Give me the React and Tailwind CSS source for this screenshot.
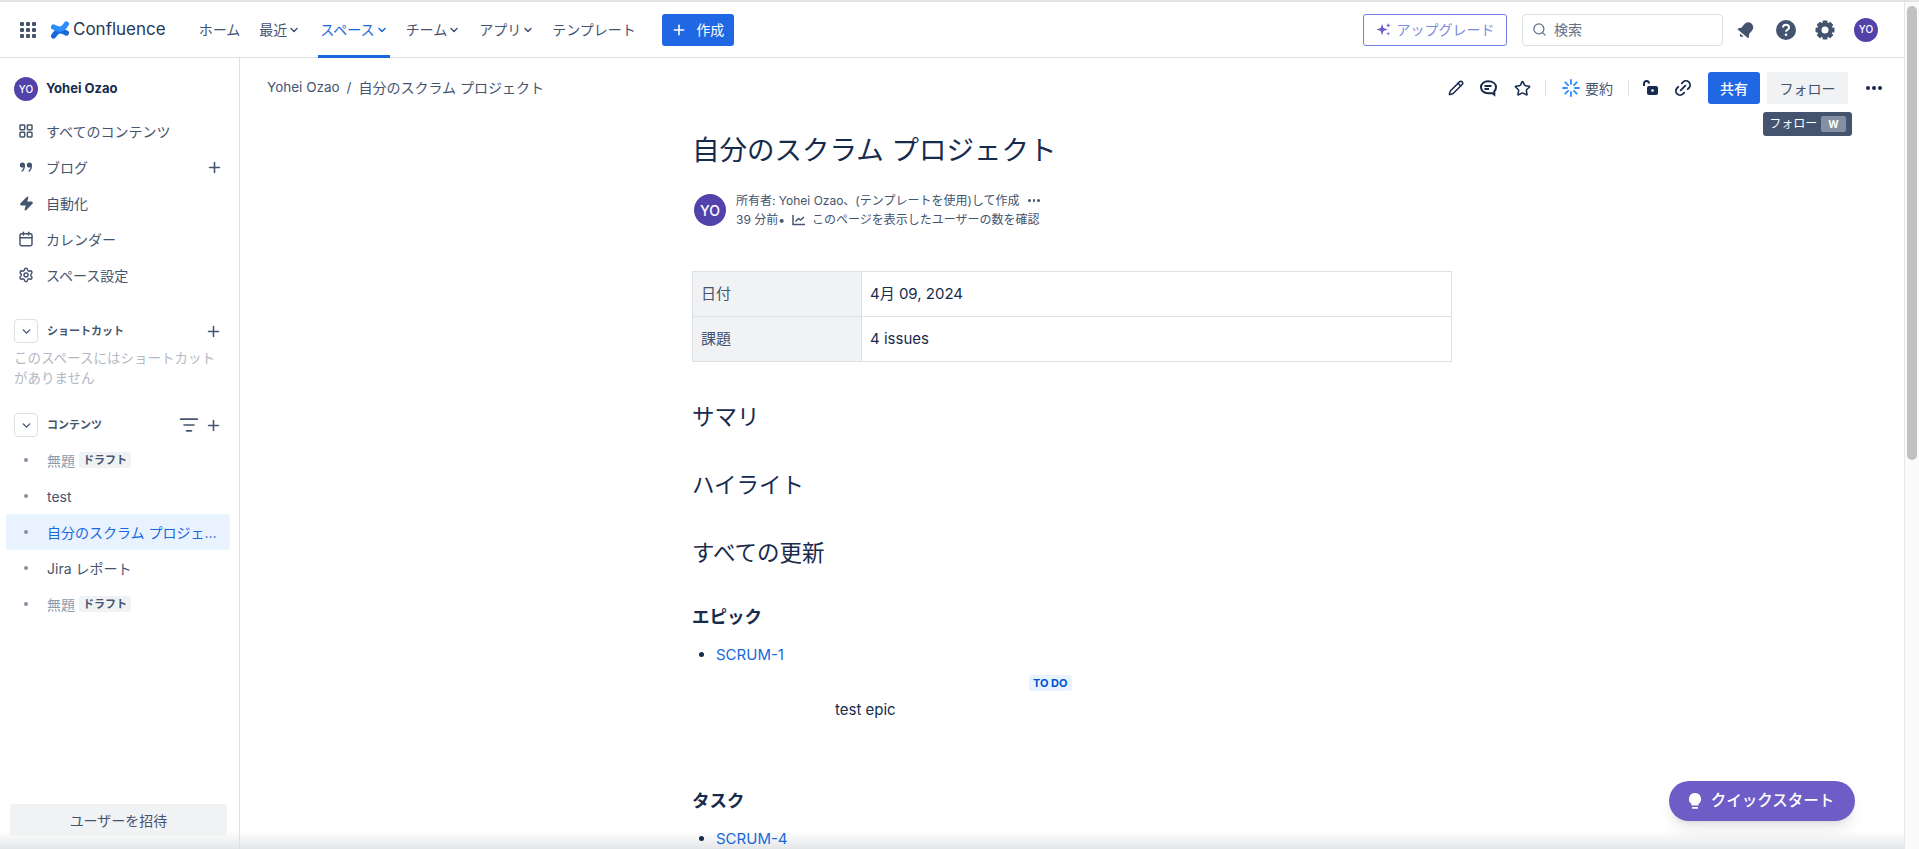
import React from "react";
import {
  Calendar,
  ChevronDown,
  LayoutGrid,
  Link2,
  ListFilter,
  Pencil,
  Plus,
  Search,
  Settings,
  Star,
  Zap,
} from "lucide-react";

const navItems = [
  { label: "ホーム", gap: "mr-[19px]" },
  { label: "最近", chevron: true, gap: "mr-[20px]" },
  { label: "スペース", chevron: true, active: true, gap: "mr-[18px]" },
  { label: "チーム", chevron: true, gap: "mr-[19px]" },
  { label: "アプリ", chevron: true, gap: "mr-[18px]" },
  { label: "テンプレート", gap: "mr-[26px]" },
];

const sideLinks = [
  { label: "すべてのコンテンツ", icon: <LayoutGrid size={16} strokeWidth={2.2} /> },
  { label: "ブログ", icon: <QuoteIcon />, plus: true },
  { label: "自動化", icon: <Zap size={15} strokeWidth={2.2} fill="#44546F" /> },
  { label: "カレンダー", icon: <Calendar size={16} strokeWidth={2.2} /> },
  { label: "スペース設定", icon: <Settings size={16} strokeWidth={2.2} /> },
];

const treeItems = [
  { label: "無題", draft: true },
  { label: "test" },
  { label: "自分のスクラム プロジェクト", selected: true },
  { label: "Jira レポート" },
  { label: "無題", draft: true },
];

function QuoteIcon() {
  return (
    <svg width="14" height="12" viewBox="0 0 14 12" fill="#44546F">
      <circle cx="3.4" cy="4" r="2.6" />
      <circle cx="10.4" cy="4" r="2.6" />
      <path d="M4.6 4.5h1.4c0 3-1 5.5-3.2 6.5l-.5-1c1.5-.9 2.3-3 2.3-5.5zM11.6 4.5H13c0 3-1 5.5-3.2 6.5l-.5-1c1.5-.9 2.3-3 2.3-5.5z" />
    </svg>
  );
}

function Logo() {
  return (
    <svg width="18" height="18" viewBox="0 0 24 24" fill="none">
      <path d="M3.500 20C8 12.500 12.500 11 20.500 16" stroke="#1868DB" strokeWidth="7" strokeLinecap="round" />
      <path d="M20.500 4C16 11.500 11.500 13 3.500 8" stroke="#2D8CFF" strokeWidth="7" strokeLinecap="round" />
    </svg>
  );
}

function AppGrid() {
  const dots = [3, 9, 15];
  return (
    <svg width="18" height="18" viewBox="0 0 18 18" fill="#44546F">
      {dots.map((y) =>
        dots.map((x) => <rect key={`${x}-${y}`} x={x - 2} y={y - 2} width="4" height="4" rx="1" />)
      )}
    </svg>
  );
}

function GearIcon() {
  const teeth = [0, 45, 90, 135, 180, 225, 270, 315];
  return (
    <svg className="ml-[19px]" width="20" height="20" viewBox="0 0 20 20" fill="#44546F">
      {teeth.map((a) => (
        <rect key={a} x="7.500" y="0.500" width="5" height="5" rx="1" transform={`rotate(${a} 10 10)`} />
      ))}
      <circle cx="10" cy="10" r="5.500" fill="none" stroke="#44546F" strokeWidth="4" />
    </svg>
  );
}

function Avatar({ size }) {
  return (
    <div className={`flex shrink-0 items-center justify-center rounded-full bg-[#5243AA] font-medium text-white ${size}`}>
      YO
    </div>
  );
}

function Draft() {
  return (
    <span className="ml-[4px] rounded-[3px] bg-[#F1F2F4] px-1 py-px text-[11px] font-bold leading-[14px] text-[#44546F]">
      ドラフト
    </span>
  );
}

function SectionHead({ label, filter }) {
  return (
    <div className="flex h-6 items-center pl-[14px] pr-[17px]">
      <div className="flex size-6 items-center justify-center rounded-[4px] border border-[#DCDFE4] text-[#44546F]">
        <ChevronDown size={13} strokeWidth={2.6} />
      </div>
      <span className="ml-[9px] grow text-[11px] font-bold text-[#44546F]">{label}</span>
      {filter && <ListFilter size={20} strokeWidth={2} className="mr-[6px] text-[#44546F]" />}
      <Plus size={17} strokeWidth={2.2} className="text-[#44546F]" />
    </div>
  );
}

function Sidebar() {
  return (
    <aside className="flex w-[240px] shrink-0 flex-col border-r border-[#DCDFE4] pb-[13px] pt-[19px]">
      <div className="flex h-6 items-center pl-[14px]">
        <Avatar size="size-6 text-[10px]" />
        <span className="ml-[8px] text-[13px] font-bold text-[#172B4D]">Yohei Ozao</span>
      </div>
      <nav className="mt-[12px] flex flex-col">
        {sideLinks.map((link) => (
          <div key={link.label} className="flex h-9 shrink-0 items-center pl-[18px] pr-[16px] text-[#44546F]">
            <span className="flex w-4 justify-center">{link.icon}</span>
            <span className="ml-[12px] grow text-[14px]">{link.label}</span>
            {link.plus && <Plus size={17} strokeWidth={2.2} />}
          </div>
        ))}
      </nav>
      <div className="mt-[26px]">
        <SectionHead label="ショートカット" />
      </div>
      <p className="mt-[5px] pl-[14px] pr-[12px] text-[13.5px] leading-[20px] text-[#B3B9C4]">
        このスペースにはショートカットがありません
      </p>
      <div className="mt-[25px]">
        <SectionHead label="コンテンツ" filter />
      </div>
      <ul className="ml-[6px] mr-[9px] mt-[5px] flex flex-col">
        {treeItems.map((item, i) => (
          <li
            key={i}
            className={`flex h-9 items-center rounded-[3px] pl-[18px] pr-[10px] text-[14px] ${
              item.selected ? "bg-[#E9F2FF] text-[#1868DB]" : "text-[#44546F]"
            }`}
          >
            <span className="size-[4px] shrink-0 rounded-full bg-[#8590A2]" />
            <span className={`ml-[19px] truncate ${item.draft ? "text-[#8C9BAB]" : ""}`}>{item.label}</span>
            {item.draft && <Draft />}
          </li>
        ))}
      </ul>
      <button className="ml-[10px] mr-[12px] mt-auto h-8 rounded-[3px] bg-[#F1F2F4] text-[14px] text-[#44546F]">
        ユーザーを招待
      </button>
    </aside>
  );
}

function TopBar() {
  return (
    <header className="flex h-[56px] shrink-0 items-center border-b border-[#DCDFE4] pl-[19px] pr-[26px]">
      <AppGrid />
      <div className="ml-[14px] flex items-center">
        <Logo />
        <span className="ml-[4px] text-[17px] text-[#253858]">Confluence</span>
      </div>
      <nav className="ml-[33px] flex h-full items-center text-[14px] text-[#44546F]">
        {navItems.map((item) => (
          <div
            key={item.label}
            className={`relative flex h-full items-center ${item.gap} ${item.active ? "text-[#1868DB]" : ""}`}
          >
            {item.label}
            {item.chevron && <ChevronDown size={12} strokeWidth={3} className="ml-px" />}
            {item.active && <span className="absolute -bottom-px -left-[2px] -right-[2px] h-[3px] bg-[#1868DB]" />}
          </div>
        ))}
      </nav>
      <button className="flex h-8 w-[72px] items-center justify-center gap-[9px] rounded-[3px] bg-[#2068E3] text-[14px] text-white">
        <Plus size={16} strokeWidth={2.4} />
        作成
      </button>
      <button className="ml-auto flex h-8 w-[144px] items-center justify-center gap-[6px] rounded-[3px] border border-[#6E7FE0] text-[14px] text-[#7B8CE0]">
        <svg width="15" height="15" viewBox="0 0 16 16" fill="#6E5DC6">
          <path d="M6.5 2l1.5 4.5L12.5 8 8 9.500 6.500 14 5 9.500.5 8 5 6.500z" />
          <path d="M13 1l.7 1.800 1.800.7-1.800.7L13 6l-.7-1.800-1.800-.7 1.800-.7zM13 10.500l.6 1.400 1.400.6-1.400.6-.6 1.400-.6-1.400-1.400-.6 1.400-.6z" />
        </svg>
        アップグレード
      </button>
      <div className="ml-[15px] flex h-8 w-[201px] items-center rounded-[4px] border border-[#DCDFE4] pl-[9px] text-[14px] text-[#626F86]">
        <Search size={15} strokeWidth={2} />
        <span className="ml-[7px]">検索</span>
      </div>
      <svg className="ml-[13px]" width="20" height="20" viewBox="0 0 20 20" fill="#44546F">
        <g transform="rotate(40 10 10)">
          <path d="M10 1.500c-3 0-5 2.300-5 5.300v4L3 14v1h14v-1l-2-3.200v-4c0-3-2-5.300-5-5.300z" />
          <path d="M8 16.500h4c0 1.200-.9 2-2 2s-2-.8-2-2z" />
        </g>
      </svg>
      <svg className="ml-[20px]" width="20" height="20" viewBox="0 0 20 20">
        <circle cx="10" cy="10" r="10" fill="#44546F" />
        <path d="M7 7.600c0-1.700 1.300-2.800 3-2.800s3 1 3 2.600c0 2.300-3 2.300-3 4.300" fill="none" stroke="#fff" strokeWidth="2" />
        <circle cx="10" cy="14.800" r="1.300" fill="#fff" />
      </svg>
      <GearIcon />
      <div className="ml-[19px]">
        <Avatar size="size-6 text-[10px]" />
      </div>
    </header>
  );
}

function PageActions() {
  return (
    <div className="relative flex h-[32px] items-center pl-[27px] pr-[22px] text-[#172B4D]">
      <nav className="mb-[2px] mr-auto flex items-center gap-[7px] text-[13.5px] text-[#44546F]">
        <span>Yohei Ozao</span>
        <span>/</span>
        <span className="text-[14px]">自分のスクラム プロジェクト</span>
      </nav>
      <Pencil size={16} strokeWidth={2.2} />
      <svg className="ml-[15px]" width="18" height="18" viewBox="0 0 18 18" fill="none" stroke="#172B4D" strokeWidth="2">
        <path d="M9 2.200c-3.900 0-7 2.600-7 6s3.100 6 7 6h4.500l1.800 1.500v-3.400c1-1 1.700-2.500 1.700-4.100 0-3.400-3.100-6-8-6z" />
        <path d="M5.500 7h7M5.500 10h4.500" />
      </svg>
      <Star className="ml-[17px]" size={17} strokeWidth={2.2} />
      <span className="ml-[14px] h-[16px] w-px bg-[#DCDFE4]" />
      <svg className="ml-[16px]" width="18" height="18" viewBox="0 0 18 18" stroke="#2D8CFF" strokeWidth="1.800" strokeLinecap="round">
        <path d="M9 1v4M9 13v4M1 9h4M13 9h4M3.300 3.300l2.800 2.800M11.900 11.900l2.800 2.800M14.700 3.300l-2.800 2.800M6.100 11.900l-2.800 2.800" />
      </svg>
      <span className="ml-[5px] text-[14px] text-[#44546F]">要約</span>
      <span className="ml-[15px] h-[16px] w-px bg-[#DCDFE4]" />
      <svg className="ml-[13px]" width="17" height="18" viewBox="0 0 17 18" fill="none">
        <path d="M2 7V4.500a2.500 2.500 0 0 1 5 0" stroke="#172B4D" strokeWidth="2" />
        <rect x="5" y="7" width="11" height="9" rx="2" fill="#172B4D" />
        <circle cx="10.500" cy="11.500" r="1.300" fill="#fff" />
      </svg>
      <Link2 className="ml-[14px] -rotate-45" size={20} strokeWidth={2.2} />
      <button className="ml-[15px] h-8 w-[52px] rounded-[3px] bg-[#2068E3] text-[14px] font-medium text-white">共有</button>
      <button className="ml-[7px] h-8 w-[81px] rounded-[3px] bg-[#F1F2F4] text-[14px] text-[#44546F]">フォロー</button>
      <span className="ml-[18px] flex gap-[2px]">
        <i className="size-[4px] rounded-full bg-[#172B4D]" />
        <i className="size-[4px] rounded-full bg-[#172B4D]" />
        <i className="size-[4px] rounded-full bg-[#172B4D]" />
      </span>
      <div className="absolute right-[52px] top-[40px] flex h-[24px] w-[89px] items-center justify-center gap-[4px] rounded-[3px] bg-[#44546F] text-[12px] text-white">
        フォロー
        <span className="rounded-[2px] bg-[#8590A2] px-[7px] text-[10px] font-bold leading-[16px]">W</span>
      </div>
    </div>
  );
}

function Article() {
  return (
    <article className="ml-[452px] w-[760px] text-[#172B4D]">
      <h1 className="mt-[30px] text-[27.5px] leading-[32px]">自分のスクラム プロジェクト</h1>
      <div className="mt-[25px] flex items-center pl-[2px]">
        <Avatar size="size-8 text-[14px]" />
        <div className="ml-[10px] text-[12px] leading-[19px] text-[#44546F]">
          <div className="flex items-center">
            所有者: Yohei Ozao、(テンプレートを使用)して作成
            <span className="ml-[9px] flex gap-[2px]">
              <i className="size-[2.500px] rounded-full bg-[#44546F]" />
              <i className="size-[2.500px] rounded-full bg-[#44546F]" />
              <i className="size-[2.500px] rounded-full bg-[#44546F]" />
            </span>
          </div>
          <div className="flex items-center">
            39 分前•
            <svg className="ml-[7px] mr-[6px]" width="14" height="12" viewBox="0 0 14 12" fill="none" stroke="#44546F" strokeWidth="1.500">
              <path d="M1 1v9.500h12M3.500 7.500l3-3 2 1.500 3.500-3" />
            </svg>
            このページを表示したユーザーの数を確認
          </div>
        </div>
      </div>
      <table className="mt-[42px] w-[760px] border-collapse text-[15px]">
        <tbody>
          <tr className="h-[45px]">
            <th className="w-[169px] border border-[#DCDFE4] bg-[#F1F2F4] px-2 text-left font-normal text-[#44546F]">日付</th>
            <td className="border border-[#DCDFE4] px-2">4月 09, 2024</td>
          </tr>
          <tr className="h-[45px]">
            <th className="border border-[#DCDFE4] bg-[#F1F2F4] px-2 text-left font-normal text-[#44546F]">課題</th>
            <td className="border border-[#DCDFE4] px-2">4 issues</td>
          </tr>
        </tbody>
      </table>
      <h2 className="mt-[41px] text-[22.5px] leading-[28px]">サマリ</h2>
      <h2 className="mt-[40px] text-[22.5px] leading-[28px]">ハイライト</h2>
      <h2 className="mt-[40px] text-[22.5px] leading-[28px]">すべての更新</h2>
      <h3 className="mt-[38px] text-[17.5px] font-bold leading-[24px]">エピック</h3>
      <ul className="mt-[14px] list-disc pl-[24px] text-[15px] leading-[24px]">
        <li className="text-[#1868DB] marker:text-[#172B4D]">SCRUM-1</li>
      </ul>
      <div className="relative mt-[32px] h-[22px] pl-[143px] text-[15px] leading-[22px]">
        test epic
        <span className="absolute -top-[24px] left-[337px] rounded-[3px] bg-[#E9F2FF] px-[4px] text-[11px] font-bold leading-[16px] text-[#0055CC]">
          TO DO
        </span>
      </div>
      <h3 className="mt-[68px] text-[17.5px] font-bold leading-[24px]">タスク</h3>
      <ul className="mt-[14px] list-disc pl-[24px] text-[15px] leading-[24px]">
        <li className="text-[#1868DB] marker:text-[#172B4D]">SCRUM-4</li>
      </ul>
    </article>
  );
}

function Scrollbar() {
  return (
    <div className="w-[15px] shrink-0 border-l border-[#E6E6E6] bg-[#FAFAFA] px-[2px] pt-[4px]">
      <div className="h-[454px] rounded-full bg-[#C1C1C1]" />
    </div>
  );
}

export default function App() {
  return (
    <div className="relative flex h-[849px] overflow-hidden border-t-2 border-[#E4E4E4] bg-white font-['Inter','Noto_Sans_CJK_JP',sans-serif]">
      {/* soft shade along the bottom, sits behind the page text */}
      <div className="pointer-events-none absolute bottom-0 left-0 right-[15px] h-[18px] bg-gradient-to-t from-[#E4E5E7] to-transparent" />
      <div className="relative flex min-w-0 grow flex-col">
        <TopBar />
        <div className="flex min-h-0 grow">
          <Sidebar />
          <main className="min-w-0 grow overflow-hidden pt-[14px]">
            <PageActions />
            <Article />
          </main>
        </div>
      </div>
      <Scrollbar />
      <button className="absolute bottom-[28px] right-[64px] flex h-10 w-[186px] items-center justify-center gap-[8px] rounded-full bg-[#6E5DC6] pr-[3px] text-[15.5px] font-medium text-white shadow-lg">
        <svg width="16" height="18" viewBox="0 0 16 18" fill="#fff">
          <path d="M8 1a6 6 0 0 0-3.500 10.900V13.500h7v-1.600A6 6 0 0 0 8 1z" />
          <rect x="5" y="15" width="6" height="1.800" rx=".5" />
        </svg>
        クイックスタート
      </button>
    </div>
  );
}
